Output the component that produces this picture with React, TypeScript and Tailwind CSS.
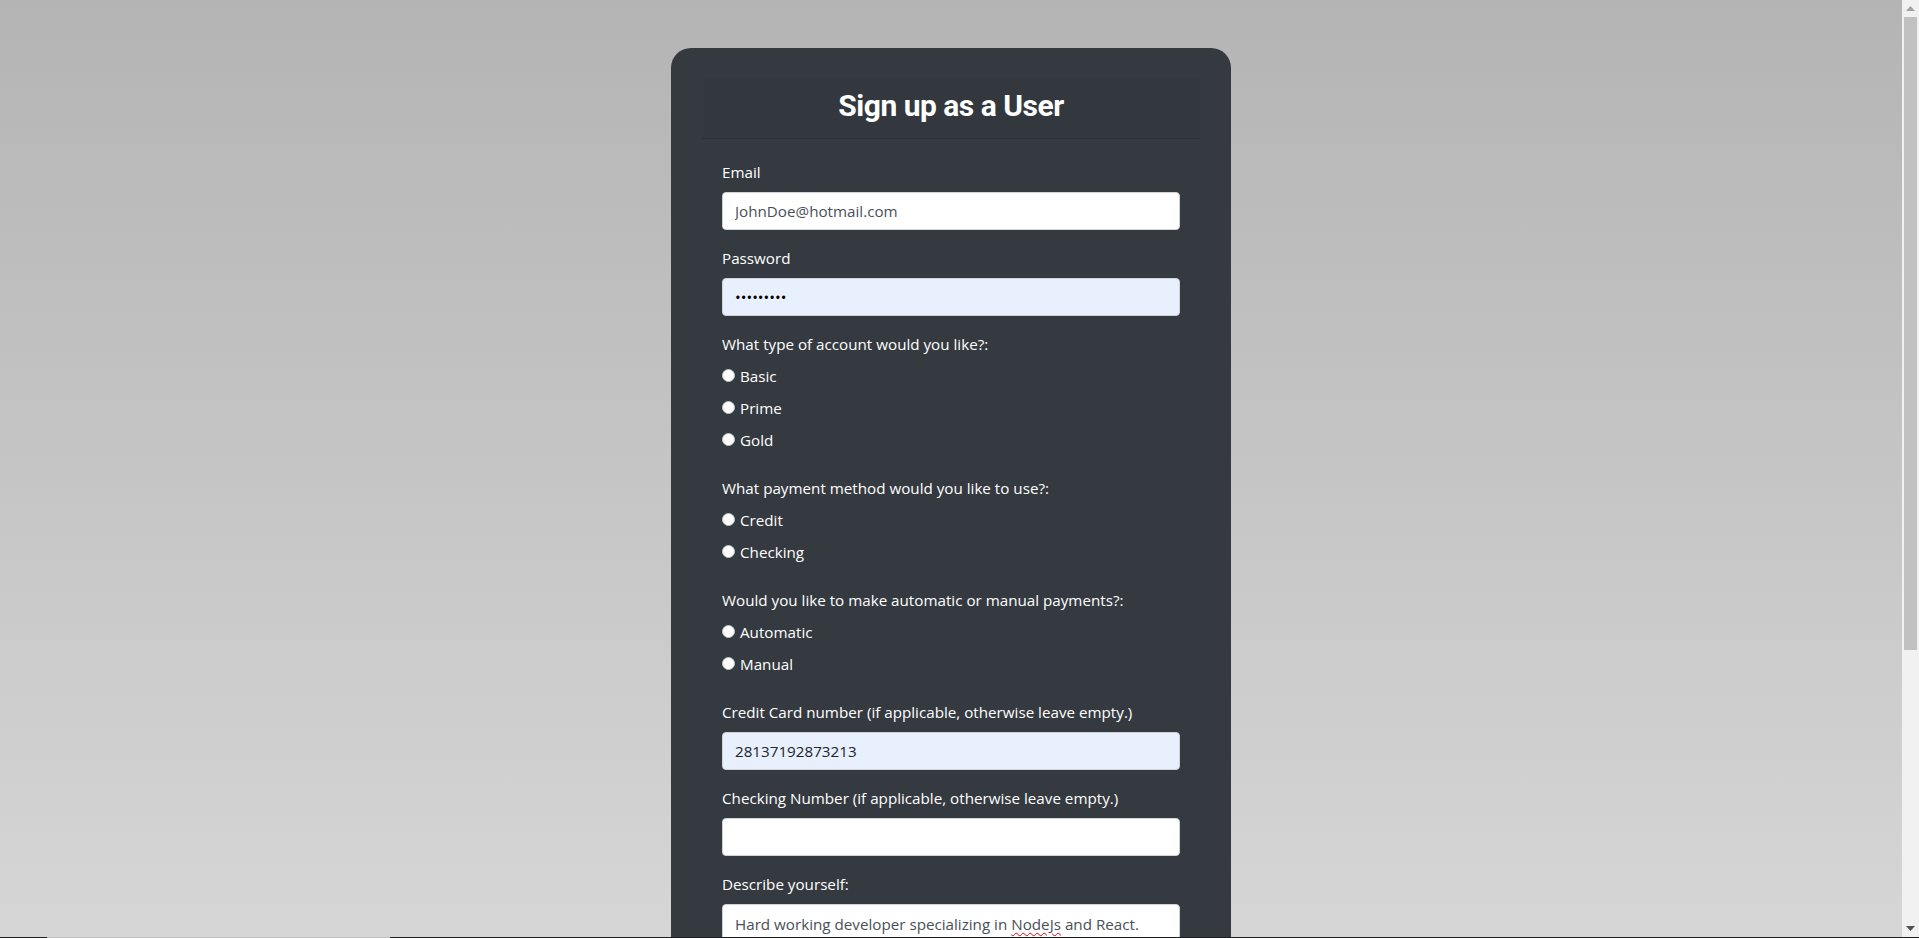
const font = "font-['Open_Sans','Noto_Sans',sans-serif]";
const inputBase = "block w-full h-[38px] px-3 text-[15.2px] border border-[#ced4da] rounded";

function Field({ label, children }: { label: string; children: React.ReactNode }) {
    return (
        <div className="mb-4">
            <label className="block mb-2 text-[15.2px] leading-6 text-white">{label}</label>
            {children}
        </div>
    );
}

function RadioGroup({ label, name, options }: { label: string; name: string; options: string[] }) {
    return (
        <div className="flex flex-col mb-4">
            <div className="mb-2 text-[15.2px] leading-6 text-white">{label}</div>
            {options.map((o) => (
                <label key={o} className="flex items-center mb-2 h-6 text-[15.2px] leading-6 text-white">
                    <input
                        type="radio"
                        name={name}
                        className="appearance-none w-[13px] h-[13px] mr-[5px] -mt-[2px] rounded-full bg-white border border-[#c8c8c8]"
                    />
                    {o}
                </label>
            ))}
        </div>
    );
}

function Scrollbar() {
    return (
        <div className="flex flex-col w-[17px] bg-[#f1f1f1]">
            <div className="flex items-center justify-center h-[17px]">
                <svg width="9" height="5" viewBox="0 0 9 5"><path d="M0 5 L4.5 0 L9 5 Z" fill="#a3a3a3" /></svg>
            </div>
            <div className="flex-1 px-[2px]">
                <div className="h-[633px] bg-[#c1c1c1]" />
            </div>
            <div className="flex items-center justify-center h-[17px]">
                <svg width="9" height="5" viewBox="0 0 9 5"><path d="M0 0 L9 0 L4.5 5 Z" fill="#505050" /></svg>
            </div>
        </div>
    );
}

export default function App() {
    return (
        <div className={`flex flex-col h-screen overflow-hidden ${font}`}>
            <div className="flex flex-1 min-h-0">
                <div className="flex-1 overflow-hidden bg-[linear-gradient(to_bottom,#b4b4b4,#d6d6d6)] pt-12">
                    <div className="mx-auto w-[560px] p-[31px] bg-[#343a40] rounded-[20px]">
                        <div className="px-5 pt-[9px] pb-[15px] bg-[#32383e] border-b border-[#2c3136] text-center">
                            <h3 className="text-[30px] leading-[35px] font-bold text-white font-['Roboto',sans-serif] tracking-[-0.5px]">
                                Sign up as a User
                            </h3>
                        </div>

                        <form className="px-5 pt-[21px] pb-5">
                            <Field label="Email">
                                <input
                                    type="email"
                                    defaultValue="JohnDoe@hotmail.com"
                                    className={`${inputBase} text-[#495057] bg-white`}
                                />
                            </Field>

                            <Field label="Password">
                                <input
                                    type="password"
                                    defaultValue="secret123"
                                    className={`${inputBase} text-black bg-[#e8f0fe]`}
                                />
                            </Field>

                            <RadioGroup
                                label="What type of account would you like?:"
                                name="account"
                                options={["Basic", "Prime", "Gold"]}
                            />
                            <RadioGroup
                                label="What payment method would you like to use?:"
                                name="payment"
                                options={["Credit", "Checking"]}
                            />
                            <RadioGroup
                                label="Would you like to make automatic or manual payments?:"
                                name="auto"
                                options={["Automatic", "Manual"]}
                            />

                            <Field label="Credit Card number (if applicable, otherwise leave empty.)">
                                <input
                                    type="text"
                                    defaultValue="28137192873213"
                                    className={`${inputBase} text-[#212529] bg-[#e8f0fe]`}
                                />
                            </Field>

                            <Field label="Checking Number (if applicable, otherwise leave empty.)">
                                <input type="text" className={`${inputBase} text-[#495057] bg-white`} />
                            </Field>

                            <Field label="Describe yourself:">
                                <div className="w-full h-[86px] px-3 py-[7px] text-[15.2px] leading-6 text-[#495057] bg-white border border-[#ced4da] rounded">
                                    Hard working developer specializing in{" "}
                                    <span className="underline decoration-wavy decoration-red-600 decoration-1 underline-offset-2">NodeJs</span>{" "}
                                    and React.
                                </div>
                            </Field>

                            <button type="submit" className="px-3 py-[6px] text-[15.2px] text-white bg-[#007bff] rounded">
                                Submit
                            </button>
                        </form>
                    </div>
                </div>
                <Scrollbar />
            </div>
            <div className="flex h-px bg-[#1e1e1e]">
                <div className="ml-[47px] w-[343px] bg-[#bdbdbd]" />
            </div>
        </div>
    );
}
